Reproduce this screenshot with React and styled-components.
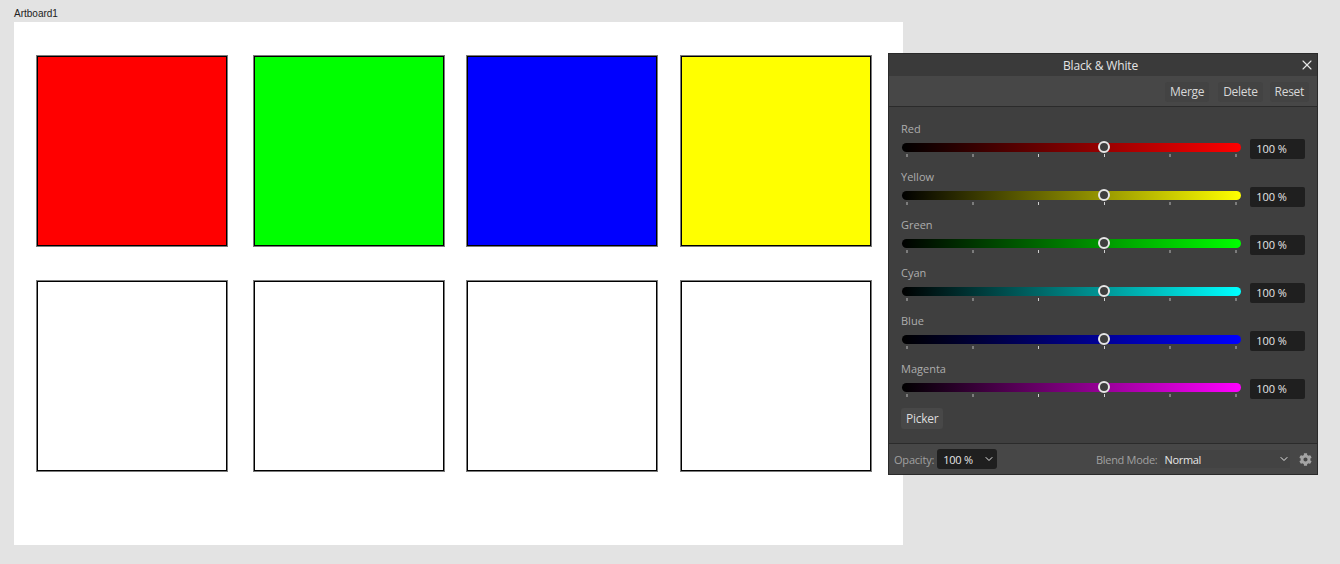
import React from 'react';
import styled, { createGlobalStyle } from 'styled-components';
import { X, ChevronDown } from 'lucide-react';
import { FaCog } from 'react-icons/fa';

const GlobalStyle = createGlobalStyle`
	html, body {
		margin: 0;
		height: 100%;
		background: #e3e3e3;
	}
	body {
		font-family: 'Open Sans', 'Noto Sans', sans-serif;
		overflow: hidden;
	}
`;

const Page = styled.div`
	position: relative;
	width: 1340px;
	height: 564px;
	padding: 6px 0 0 14px;
	box-sizing: border-box;
`;

const BoardLabel = styled.div`
	font-family: 'Liberation Sans', Arial, sans-serif;
	font-size: 10px;
	line-height: 16px;
	color: #222;
`;

const Board = styled.div`
	width: 889px;
	height: 523px;
	background: #fff;
	padding: 34px 0 0 23px;
	box-sizing: border-box;
	display: grid;
	grid-template-columns: 217px 213px 214px 190px;
	grid-template-rows: 225px 190px;
`;

// 1px dark edge plus a soft grey pixel outside it
const Tile = styled.div`
	width: 190px;
	height: 190px;
	box-sizing: border-box;
	background: ${(p) => p.$color};
	border: 1px solid #000;
	box-shadow: 0 0 0 1px #7a7a7a;
`;

const Panel = styled.div`
	position: absolute;
	left: 888px;
	top: 53px;
	width: 430px;
	height: 422px;
	box-sizing: border-box;
	background: #3f3f3f;
	border: 1px solid #2a2a2a;
	display: flex;
	flex-direction: column;
`;

const TitleBar = styled.div`
	height: 22px;
	background: #3a3a3a;
	display: flex;
	align-items: center;
	justify-content: center;
	position: relative;
	font-size: 12px;
	letter-spacing: -0.15px;
	padding-right: 5px;
	color: #e4e4e4;
`;

const CloseBtn = styled.span`
	position: absolute;
	right: 2px;
	top: 3px;
	display: flex;
	color: #e8e8e8;
`;

const Toolbar = styled.div`
	height: 31px;
	background: #474747;
	border-bottom: 1px solid #2b2b2b;
	display: flex;
	align-items: center;
	justify-content: flex-end;
	gap: 7px;
	padding: 2px 8px 0 0;
	box-sizing: border-box;
`;

const ToolBtn = styled.div`
	height: 20px;
	padding: 0 5px;
	margin-right: ${(p) => p.$after || 0}px;
	background: #434343;
	border-radius: 3px;
	font-size: 12px;
	letter-spacing: -0.3px;
	line-height: 20px;
	color: #d8d8d8;
`;

const Body = styled.div`
	flex: 1;
	padding: 14px 12px 0 13px;
`;

const Row = styled.div`
	height: 48px;
`;

const RowLabel = styled.div`
	font-size: 11px;
	line-height: 16px;
	color: #adadad;
	margin-left: -1px;
`;

const SliderLine = styled.div`
	display: flex;
	align-items: flex-start;
	gap: 9px;
`;

const SliderWrap = styled.div`
	width: 340px;
	padding-top: 6px;
`;

const Track = styled.div`
	position: relative;
	height: 9px;
	border-radius: 5px;
	background: linear-gradient(to right, #000, ${(p) => p.$color});
`;

const Thumb = styled.span`
	position: absolute;
	left: 196px;
	top: -2px;
	width: 12px;
	height: 12px;
	box-sizing: border-box;
	border: 2px solid #e6e6e6;
	border-radius: 50%;
	background: #3f3f3f;
`;

const Ticks = styled.div`
	display: flex;
	justify-content: space-between;
	padding: 2px 4px 0;
`;

const Tick = styled.span`
	width: ${(p) => (p.$light ? '1px' : '2px')};
	height: 3px;
	background: ${(p) => (p.$light ? '#cfcfcf' : '#7c7c7c')};
`;

const ValueBox = styled.div`
	width: 55px;
	height: 20px;
	margin-top: 2px;
	background: #1f1f1f;
	border-radius: 2px;
	font-size: 11px;
	line-height: 20px;
	color: #e6e6e6;
	padding-left: 6px;
	box-sizing: border-box;
`;

const PickerBtn = styled.div`
	width: fit-content;
	height: 21px;
	padding: 0 5px;
	margin-left: -1px;
	margin-top: -1px;
	background: #484848;
	border-radius: 3px;
	font-size: 12px;
	letter-spacing: -0.25px;
	line-height: 21px;
	color: #dcdcdc;
`;

const Footer = styled.div`
	height: 31px;
	box-sizing: border-box;
	background: #474747;
	border-top: 1px solid #2b2b2b;
	display: flex;
	align-items: center;
	padding: 0 5px;
	font-size: 11px;
	letter-spacing: -0.2px;
	white-space: nowrap;
	color: #a0a0a0;
`;

const Opacity = styled.div`
	width: 60px;
	height: 20px;
	margin-left: 3px;
	padding: 0 2px 0 6px;
	box-sizing: border-box;
	background: #1f1f1f;
	border-radius: 3px;
	display: flex;
	align-items: center;
	justify-content: space-between;
	color: #e6e6e6;
`;

const BlendLabel = styled.span`
	margin-left: 99px;
	letter-spacing: -0.3px;
`;

const Blend = styled.div`
	width: 130px;
	height: 18px;
	margin-left: 3px;
	padding: 0 0 0 4px;
	box-sizing: border-box;
	background: #434343;
	display: flex;
	align-items: center;
	justify-content: space-between;
	letter-spacing: -0.3px;
	color: #e6e6e6;
`;

const Gear = styled.span`
	display: flex;
	margin-left: 9px;
	color: #a4a4a4;
`;

const tiles = ['#ff0000', '#00ff00', '#0000ff', '#ffff00', '#fff', '#fff', '#fff', '#fff'];

const channels = ['Red', 'Yellow', 'Green', 'Cyan', 'Blue', 'Magenta'];
const channelColors = {
	Red: '#ff0000',
	Yellow: '#ffff00',
	Green: '#00ff00',
	Cyan: '#00ffff',
	Blue: '#0000ff',
	Magenta: '#ff00ff',
};

const App = () => {
	return (
		<Page>
			<GlobalStyle />
			<BoardLabel>Artboard1</BoardLabel>
			<Board>
				{tiles.map((c, i) => (
					<Tile key={i} $color={c} />
				))}
			</Board>
			<Panel>
				<TitleBar>
					Black &amp; White
					<CloseBtn>
						<X size={16} strokeWidth={1.6} />
					</CloseBtn>
				</TitleBar>
				<Toolbar>
					<ToolBtn $after={2}>Merge</ToolBtn>
					<ToolBtn>Delete</ToolBtn>
					<ToolBtn>Reset</ToolBtn>
				</Toolbar>
				<Body>
					{channels.map((name) => (
						<Row key={name}>
							<RowLabel>{name}</RowLabel>
							<SliderLine>
								<SliderWrap>
									<Track $color={channelColors[name]}>
										<Thumb />
									</Track>
									<Ticks>
										{[0, 1, 2, 3, 4, 5].map((t) => (
											<Tick key={t} $light={t === 2 || t === 3} />
										))}
									</Ticks>
								</SliderWrap>
								<ValueBox>100 %</ValueBox>
							</SliderLine>
						</Row>
					))}
					<PickerBtn>Picker</PickerBtn>
				</Body>
				<Footer>
					Opacity:
					<Opacity>
						100 %
						<ChevronDown size={12} />
					</Opacity>
					<BlendLabel>Blend Mode:</BlendLabel>
					<Blend>
						Normal
						<ChevronDown size={12} />
					</Blend>
					<Gear>
						<FaCog size={13} />
					</Gear>
				</Footer>
			</Panel>
		</Page>
	);
};

export default App;
